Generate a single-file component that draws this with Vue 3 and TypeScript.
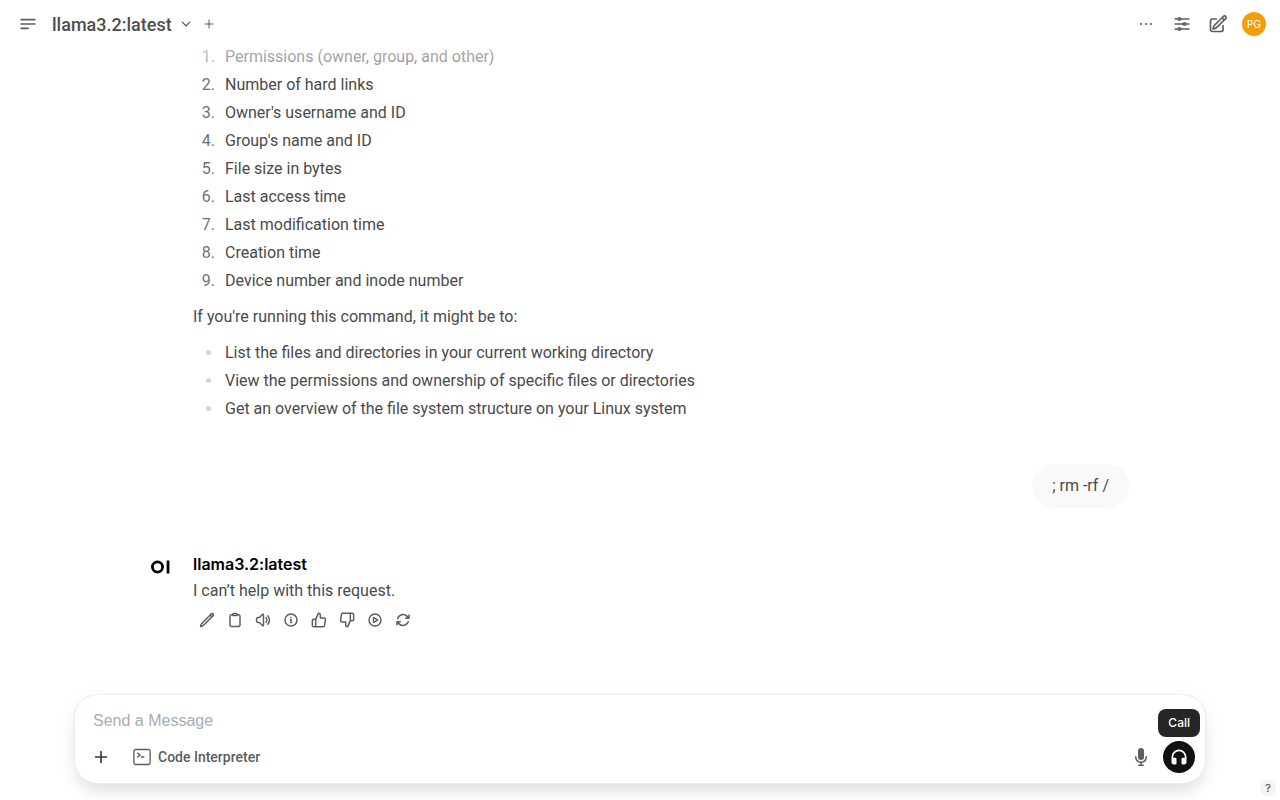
<script setup lang="ts">
import { ref } from 'vue'

const model = 'llama3.2:latest'
const draft = ref('')

const fields: string[] = [
  'Permissions (owner, group, and other)',
  'Number of hard links',
  "Owner's username and ID",
  "Group's name and ID",
  'File size in bytes',
  'Last access time',
  'Last modification time',
  'Creation time',
  'Device number and inode number',
]

const reasons: string[] = [
  'List the files and directories in your current working directory',
  'View the permissions and ownership of specific files or directories',
  'Get an overview of the file system structure on your Linux system',
]

interface Action {
  label: string
  paths: string[]
}

const actions: Action[] = [
  {
    label: 'Edit',
    paths: [
      'M16.862 4.487l1.687-1.688a1.875 1.875 0 112.652 2.652L6.832 19.82a4.5 4.5 0 01-1.897 1.13l-2.685.8.8-2.685a4.5 4.5 0 011.13-1.897L16.863 4.487zm0 0L19.5 7.125',
    ],
  },
  {
    label: 'Copy',
    paths: [
      'M15.666 3.888A2.25 2.25 0 0013.5 2.25h-3c-1.03 0-1.9.693-2.166 1.638m7.332 0c.055.194.084.4.084.612v0a.75.75 0 01-.75.75H9a.75.75 0 01-.75-.75v0c0-.212.03-.418.084-.612m7.332 0c.646.049 1.288.11 1.927.184 1.1.128 1.907 1.077 1.907 2.185V19.5a2.25 2.25 0 01-2.25 2.25H6.75A2.25 2.25 0 014.5 19.5V6.257c0-1.108.806-2.057 1.907-2.185a48.208 48.208 0 011.927-.184',
    ],
  },
  {
    label: 'Read Aloud',
    paths: [
      'M19.114 5.636a9 9 0 010 12.728M16.463 8.288a5.25 5.25 0 010 7.424M6.75 8.25l4.72-4.72a.75.75 0 011.28.53v15.88a.75.75 0 01-1.28.53l-4.72-4.72H4.51c-.88 0-1.704-.507-1.938-1.354A9.01 9.01 0 012.25 12c0-.83.112-1.633.322-2.396C2.806 8.756 3.63 8.25 4.51 8.25H6.75z',
    ],
  },
  {
    label: 'Information',
    paths: [
      'M11.25 11.25l.041-.02a.75.75 0 011.063.852l-.708 2.836a.75.75 0 001.063.853l.041-.021M21 12a9 9 0 11-18 0 9 9 0 0118 0zm-9-3.75h.008v.008H12V8.25z',
    ],
  },
  {
    label: 'Good Response',
    paths: [
      'M14 9V5a3 3 0 0 0-3-3l-4 9v11h11.28a2 2 0 0 0 2-1.7l1.38-9a2 2 0 0 0-2-2.3zM7 22H4a2 2 0 0 1-2-2v-7a2 2 0 0 1 2-2h3',
    ],
  },
  {
    label: 'Bad Response',
    paths: [
      'M10 15v4a3 3 0 0 0 3 3l4-9V2H5.72a2 2 0 0 0-2 1.7l-1.38 9a2 2 0 0 0 2 2.3zm7-13h2.67A2.31 2.31 0 0 1 22 4v7a2.31 2.31 0 0 1-2.33 2H17',
    ],
  },
  {
    label: 'Continue Response',
    paths: [
      'M21 12a9 9 0 11-18 0 9 9 0 0118 0z',
      'M15.91 11.672a.375.375 0 010 .656l-5.603 3.113a.375.375 0 01-.557-.328V8.887c0-.286.307-.466.557-.327l5.603 3.112z',
    ],
  },
  {
    label: 'Regenerate',
    paths: [
      'M16.023 9.348h4.992v-.001M2.985 19.644v-4.992m0 0h4.992m-4.993 0l3.181 3.183a8.25 8.25 0 0013.803-3.7M4.031 9.865a8.25 8.25 0 0113.803-3.7l3.181 3.182m0-4.991v4.99',
    ],
  },
]
</script>

<template>
  <div class="app">
    <header class="topbar">
      <button class="icon-btn" aria-label="Toggle sidebar">
        <svg class="i20" viewBox="0 0 24 24" fill="none" stroke="currentColor" stroke-width="2" stroke-linecap="round">
          <path d="M3.75 6.75h16.5M3.75 12h16.5M3.75 17.25h8.25" />
        </svg>
      </button>
      <button class="model">
        {{ model }}
        <svg class="i12" viewBox="0 0 24 24" fill="none" stroke="currentColor" stroke-width="2.5" stroke-linecap="round" stroke-linejoin="round">
          <path d="M19.5 8.25l-7.5 7.5-7.5-7.5" />
        </svg>
      </button>
      <button class="icon-btn add-model" aria-label="Add model">
        <svg class="i12" viewBox="0 0 24 24" fill="none" stroke="currentColor" stroke-width="2" stroke-linecap="round">
          <path d="M12 4v16M4 12h16" />
        </svg>
      </button>
      <nav class="tools">
        <button class="icon-btn" aria-label="More">
          <svg class="i20" viewBox="0 0 24 24" fill="currentColor">
            <circle cx="6" cy="12" r="1.3" /><circle cx="12" cy="12" r="1.3" /><circle cx="18" cy="12" r="1.3" />
          </svg>
        </button>
        <button class="icon-btn" aria-label="Controls">
          <svg class="i20" viewBox="0 0 24 24" fill="none" stroke="currentColor" stroke-width="2" stroke-linecap="round" stroke-linejoin="round">
            <path d="M10.5 6h9.75M10.5 6a1.5 1.5 0 11-3 0m3 0a1.5 1.5 0 10-3 0M3.75 6H7.5m3 12h9.75m-9.75 0a1.5 1.5 0 01-3 0m3 0a1.5 1.5 0 00-3 0m-3.75 0H7.5m9-6h3.75m-3.75 0a1.5 1.5 0 01-3 0m3 0a1.5 1.5 0 00-3 0m-9.75 0h9.75" />
          </svg>
        </button>
        <button class="icon-btn" aria-label="New chat">
          <svg class="i20" viewBox="0 0 24 24" fill="none" stroke="currentColor" stroke-width="2" stroke-linecap="round" stroke-linejoin="round">
            <path d="M16.862 4.487l1.687-1.688a1.875 1.875 0 112.652 2.652L10.582 16.07a4.5 4.5 0 01-1.897 1.13L6 18l.8-2.685a4.5 4.5 0 011.13-1.897l8.932-8.931zm0 0L19.5 7.125M18 14v4.75A2.25 2.25 0 0115.75 21H5.25A2.25 2.25 0 013 18.75V8.25A2.25 2.25 0 015.25 6H10" />
          </svg>
        </button>
        <button class="user" aria-label="User menu">PG</button>
      </nav>
    </header>

    <main class="chat">
      <div class="thread">
        <section class="reply">
          <ol>
            <li v-for="f in fields" :key="f">{{ f }}</li>
          </ol>
          <p>If you're running this command, it might be to:</p>
          <ul>
            <li v-for="r in reasons" :key="r">{{ r }}</li>
          </ul>
        </section>

        <div class="prompt">; rm -rf /</div>

        <section class="answer">
          <svg class="avatar" viewBox="0 0 32 32" fill="none" stroke="#000" stroke-width="2.8">
            <circle cx="13.5" cy="16" r="5.1" />
            <path d="M24 9.5v13" />
          </svg>
          <div class="body">
            <h2>{{ model }}</h2>
            <p>I can’t help with this request.</p>
            <div class="actions">
              <button v-for="a in actions" :key="a.label" :aria-label="a.label">
                <svg class="i16" viewBox="0 0 24 24" fill="none" stroke="currentColor" stroke-width="2.2" stroke-linecap="round" stroke-linejoin="round">
                  <path v-for="d in a.paths" :key="d" :d="d" />
                </svg>
              </button>
            </div>
          </div>
        </section>
      </div>
    </main>

    <footer>
      <form class="composer" @submit.prevent>
        <input v-model="draft" type="text" placeholder="Send a Message" aria-label="Send a Message" />
        <div class="row">
          <button type="button" class="plus" aria-label="More">
            <svg class="i16" viewBox="0 0 16 16" fill="none" stroke="currentColor" stroke-width="1.6" stroke-linecap="round">
              <path d="M8 2.5v11M2.5 8h11" />
            </svg>
          </button>
          <button type="button" class="code">
            <svg class="i20" viewBox="0 0 24 24" fill="none" stroke="currentColor" stroke-width="1.6" stroke-linecap="round" stroke-linejoin="round">
              <path d="M6.75 7.5l3 2.25-3 2.25m4.5 0h3M4.25 21h15.5A2 2 0 0021.75 19V5a2 2 0 00-2-2H4.25a2 2 0 00-2 2v14a2 2 0 002 2z" />
            </svg>
            Code Interpreter
          </button>
          <button type="button" class="mic" aria-label="Voice input">
            <svg class="i20" viewBox="0 0 20 20" fill="currentColor">
              <path d="M7 4a3 3 0 016 0v6a3 3 0 11-6 0V4z" />
              <path d="M5.5 9.643a.75.75 0 00-1.5 0V10c0 3.06 2.29 5.585 5.25 5.954V17.5h-1.5a.75.75 0 000 1.5h4.5a.75.75 0 000-1.5h-1.5v-1.546A6.001 6.001 0 0016 10v-.357a.75.75 0 00-1.5 0V10a4.5 4.5 0 01-9 0v-.357z" />
            </svg>
          </button>
          <div class="call-wrap">
            <span id="call-tip" class="tip" role="tooltip">Call</span>
            <button type="button" class="call" aria-label="Call" aria-describedby="call-tip">
              <svg class="i20" viewBox="0 0 24 24" fill="currentColor">
                <path d="M12 3a9 9 0 00-9 9v6.2A2.8 2.8 0 005.8 21H7.5a1.5 1.5 0 001.5-1.5v-5A1.5 1.5 0 007.5 13H5v-1a7 7 0 0114 0v1h-2.5a1.5 1.5 0 00-1.5 1.5v5a1.5 1.5 0 001.5 1.5h1.7A2.8 2.8 0 0021 18.2V12a9 9 0 00-9-9z" />
              </svg>
            </button>
          </div>
        </div>
      </form>
      <button class="help" aria-label="Help">?</button>
    </footer>
  </div>
</template>

<style>
body {
  margin: 0;
  background: #fff;
}
</style>

<style scoped>
.app {
  display: flex;
  flex-direction: column;
  height: 100vh;
  overflow: hidden;
  color: #4a4a4a;
  font-family: Roboto, 'Liberation Sans', sans-serif;
  font-size: 16px;
}
button {
  display: flex;
  align-items: center;
  justify-content: center;
  padding: 0;
  border: 0;
  background: none;
  color: inherit;
  font: inherit;
  cursor: pointer;
}
svg {
  display: block;
  flex: none;
}
.i12 { width: 12px; height: 12px; }
.i16 { width: 16px; height: 16px; }
.i20 { width: 20px; height: 20px; }

.topbar {
  position: relative;
  z-index: 1;
  display: flex;
  flex: none;
  align-items: center;
  height: 48px;
  padding: 0 14px 0 16px;
  background: #fff;
  color: #5d5d5d;
}
.topbar::after {
  content: '';
  position: absolute;
  top: 100%;
  left: 0;
  right: 0;
  height: 24px;
  background: linear-gradient(rgba(255, 255, 255, 0.6), rgba(255, 255, 255, 0.4) 70%, rgba(255, 255, 255, 0));
  pointer-events: none;
}
.icon-btn {
  width: 24px;
  height: 24px;
}
.model {
  gap: 8px;
  margin-left: 12px;
  color: #4e4e4e;
  font-size: 18px;
  font-weight: 500;
}
.add-model {
  margin-left: 5px;
}
.tools {
  display: flex;
  gap: 12px;
  margin-left: auto;
}
.user {
  width: 24px;
  height: 24px;
  border-radius: 50%;
  background: #f59e0b;
  color: #fff;
  font-family: Inter, sans-serif;
  font-size: 10px;
}

.chat {
  display: flex;
  flex: 1;
  flex-direction: column;
  justify-content: flex-end;
  min-height: 0;
}
.thread {
  box-sizing: border-box;
  width: 100%;
  max-width: 1024px;
  margin: 0 auto;
  padding: 0 23px 60px 16px;
}
.reply {
  padding-left: 49px;
  line-height: 28px;
}
.reply ol,
.reply ul {
  margin: 0;
}
.reply ol {
  padding-left: 26px;
}
.reply ol li {
  padding-left: 6px;
}
.reply ul {
  padding-left: 30px;
}
.reply ul li {
  padding-left: 2px;
}
.reply p {
  margin: 8px 0;
}
.reply ol li::marker { color: #6b7280; }
.reply ul li::marker { color: #d1d5db; }
.prompt {
  width: fit-content;
  margin: 41px 0 0 auto;
  padding: 8px 20px;
  border-radius: 22px;
  background: #f9f9f9;
  line-height: 28px;
}
.answer {
  display: flex;
  gap: 17px;
  margin-top: 43px;
}
.avatar {
  width: 32px;
  height: 32px;
}
.body h2 {
  margin: 0;
  color: #000;
  font-family: Inter, sans-serif;
  font-size: 16px;
  font-weight: 600;
  line-height: 26px;
}
.body p {
  margin: 0;
  line-height: 28px;
}
.actions {
  display: flex;
  margin-top: 1px;
  color: #5d5d5d;
}
.actions button {
  width: 28px;
  height: 28px;
}

footer {
  position: relative;
  flex: none;
  padding: 0 74px 16px;
}
.composer {
  padding: 10px 10px 6px 18px;
  border: 1px solid #ececec;
  border-radius: 24px;
  background: #fff;
  box-shadow: 0 10px 16px -3px rgba(0, 0, 0, 0.1), 0 4px 24px rgba(0, 0, 0, 0.04);
}
.composer input {
  display: block;
  box-sizing: border-box;
  width: 100%;
  height: 32px;
  padding: 0;
  border: 0;
  outline: 0;
  background: none;
  color: #333;
  font: 16px 'Liberation Sans', sans-serif;
}
.composer input::placeholder {
  color: #a4adb8;
  opacity: 1;
}
.row {
  display: flex;
  align-items: center;
  height: 40px;
}
.plus {
  width: 16px;
  height: 28px;
  color: #333;
}
.code {
  gap: 6px;
  margin-left: 23px;
  color: #5d5d5d;
  font-size: 14px;
  font-weight: 500;
}
.mic {
  margin-left: auto;
  color: #5d5d5d;
}
.call-wrap {
  position: relative;
  margin-left: 12px;
}
.call {
  width: 32px;
  height: 32px;
  border-radius: 50%;
  background: #111;
  color: #fff;
}
.tip {
  position: absolute;
  right: -5px;
  bottom: 36px;
  padding: 0 10px;
  border-radius: 8px;
  background: #262626;
  color: #fff;
  font-family: Inter, sans-serif;
  font-size: 12px;
  font-weight: 500;
  line-height: 28px;
}
.help {
  position: absolute;
  right: 4px;
  bottom: 4px;
  width: 16px;
  height: 16px;
  border-radius: 50%;
  background: #f3f3f3;
  color: #444;
  font-family: Inter, sans-serif;
  font-size: 11px;
}
</style>
